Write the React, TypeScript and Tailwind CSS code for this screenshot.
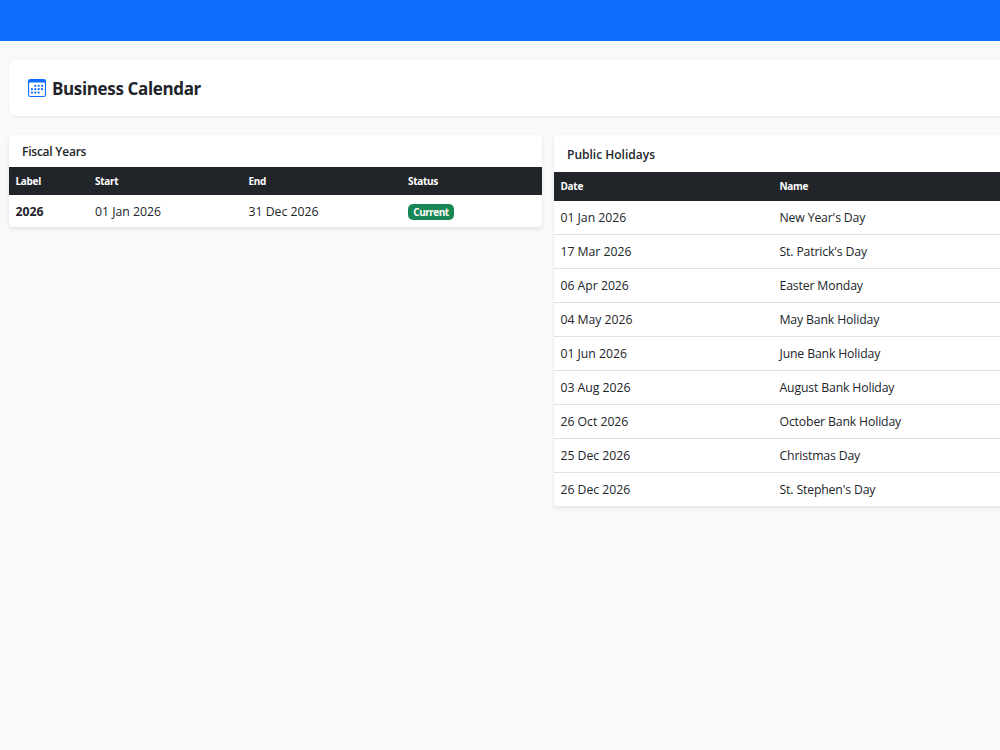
const holidays = [
  ["01 Jan 2026", "New Year's Day"],
  ["17 Mar 2026", "St. Patrick's Day"],
  ["06 Apr 2026", "Easter Monday"],
  ["04 May 2026", "May Bank Holiday"],
  ["01 Jun 2026", "June Bank Holiday"],
  ["03 Aug 2026", "August Bank Holiday"],
  ["26 Oct 2026", "October Bank Holiday"],
  ["25 Dec 2026", "Christmas Day"],
  ["26 Dec 2026", "St. Stephen's Day"],
];

function CalendarIcon() {
  return (
    <svg className="h-[18px] w-[18px] shrink-0 text-[#0d6efd]" viewBox="0 0 16 16" fill="currentColor">
      <path d="M14 0H2a2 2 0 0 0-2 2v12a2 2 0 0 0 2 2h12a2 2 0 0 0 2-2V2a2 2 0 0 0-2-2M1 3.857C1 3.384 1.448 3 2 3h12c.552 0 1 .384 1 .857v10.286c0 .473-.448.857-1 .857H2c-.552 0-1-.384-1-.857z" />
      <path d="M6.5 7a1 1 0 1 0 0-2 1 1 0 0 0 0 2m3 0a1 1 0 1 0 0-2 1 1 0 0 0 0 2m3 0a1 1 0 1 0 0-2 1 1 0 0 0 0 2m-9 3a1 1 0 1 0 0-2 1 1 0 0 0 0 2m3 0a1 1 0 1 0 0-2 1 1 0 0 0 0 2m3 0a1 1 0 1 0 0-2 1 1 0 0 0 0 2m3 0a1 1 0 1 0 0-2 1 1 0 0 0 0 2m-9 3a1 1 0 1 0 0-2 1 1 0 0 0 0 2m3 0a1 1 0 1 0 0-2 1 1 0 0 0 0 2m3 0a1 1 0 1 0 0-2 1 1 0 0 0 0 2" />
    </svg>
  );
}

export default function App() {
  return (
    <div className="h-[750px] w-[1000px] overflow-hidden bg-[#f8f9fb] font-['Open_Sans','Noto_Sans',sans-serif] text-[12.25px] text-[#212529]">
      <nav className="h-[41px] bg-[#0d6efd]" />
      <main className="w-[1100px] pl-[9px] pt-[19px]">
        <header className="flex h-[56px] items-center gap-[6px] rounded-lg bg-white pl-[19px] shadow-[0_1px_3px_rgba(0,0,0,0.07)]">
          <CalendarIcon />
          <h1 className="pt-[2px] text-[17px] font-bold leading-6 tracking-[-0.36px]">Business Calendar</h1>
        </header>
        <div className="mt-[19px] flex items-start gap-[12px]">
          <section className="w-[533px] shrink-0 rounded-[4px] bg-white shadow-[0_2px_4px_rgba(0,0,0,0.09)]">
            <h2 className="flex h-[32px] items-center pl-[13px] pt-px text-[12px] font-semibold tracking-[-0.23px]">Fiscal Years</h2>
            <div className="grid h-[28px] grid-cols-[79.5px_153.5px_159.5px_1fr] items-center bg-[#212529] pl-[6.5px] text-[10px] font-bold tracking-[-0.3px] text-white">
              <span>Label</span>
              <span>Start</span>
              <span>End</span>
              <span>Status</span>
            </div>
            <div className="grid h-[32px] grid-cols-[79.5px_153.5px_159.5px_1fr] items-center pl-[6.5px] pt-[2px]">
              <span className="font-bold">2026</span>
              <span>01 Jan 2026</span>
              <span>31 Dec 2026</span>
              <span className="flex h-[16px] w-[46px] items-center justify-center rounded-[5px] bg-[#198754] pt-px text-[10px] font-bold tracking-[-0.5px] text-white">Current</span>
            </div>
          </section>
          <section className="grow rounded-[4px] bg-white shadow-[0_2px_4px_rgba(0,0,0,0.09)]">
            <h2 className="flex h-[37px] items-center pl-[13px] pt-[2px] text-[12px] font-semibold">Public Holidays</h2>
            <div className="grid h-[29px] grid-cols-[219px_1fr] items-center bg-[#212529] pl-[6.5px] text-[10px] font-bold tracking-[-0.3px] text-white">
              <span>Date</span>
              <span>Name</span>
            </div>
            {holidays.map(([date, name]) => (
              <div key={date} className="grid h-[34px] grid-cols-[219px_1fr] items-center border-b border-[#dee2e6] pl-[6.5px] pt-px last:h-[33px] last:border-b-0">
                <span className="tracking-[-0.03px]">{date}</span>
                <span className="tracking-[-0.15px]">{name}</span>
              </div>
            ))}
          </section>
        </div>
      </main>
    </div>
  );
}
